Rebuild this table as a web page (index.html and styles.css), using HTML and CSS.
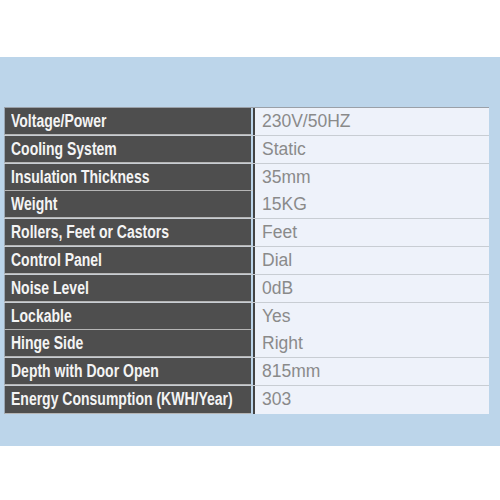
FILE: index.html
```html
<!DOCTYPE html>
<html>
<head>
<meta charset="utf-8">
<link rel="stylesheet" href="styles.css">
</head>
<body>
<div class="top"></div>
<div class="band">
  <div class="specs">
    <div class="row"><div class="k"><span class="lbl">Voltage/Power</span></div><div class="v">230V/50HZ</div></div>
    <div class="row"><div class="k"><span class="lbl">Cooling System</span></div><div class="v">Static</div></div>
    <div class="row"><div class="k"><span class="lbl">Insulation Thickness</span></div><div class="v">35mm</div></div>
    <div class="row"><div class="k"><span class="lbl">Weight</span></div><div class="v">15KG</div></div>
    <div class="row"><div class="k"><span class="lbl">Rollers, Feet or Castors</span></div><div class="v">Feet</div></div>
    <div class="row"><div class="k"><span class="lbl">Control Panel</span></div><div class="v">Dial</div></div>
    <div class="row"><div class="k"><span class="lbl">Noise Level</span></div><div class="v">0dB</div></div>
    <div class="row"><div class="k"><span class="lbl">Lockable</span></div><div class="v">Yes</div></div>
    <div class="row"><div class="k"><span class="lbl">Hinge Side</span></div><div class="v">Right</div></div>
    <div class="row"><div class="k"><span class="lbl">Depth with Door Open</span></div><div class="v">815mm</div></div>
    <div class="row"><div class="k"><span class="lbl">Energy Consumption (KWH/Year)</span></div><div class="v">303</div></div>
  </div>
</div>
</body>
</html>
```
FILE: styles.css
```css
html, body {
  margin: 0;
  padding: 0;
  background: #ffffff;
}
.top {
  height: 57px;
}
.band {
  height: 389px;
  background: #bcd5ea;
  padding: 50px 11px 0 4px;
  box-sizing: border-box;
}
.specs {
  display: flex;
  flex-direction: column;
  border-top: 1px solid #9aa0a8;
}
.row {
  display: grid;
  grid-template-columns: 247px 1fr;
  column-gap: 2px;
  height: 27.8px;
  box-sizing: border-box;
  border-bottom: 1px solid #c8cdd3;
}
.row:last-child {
  border-bottom: none;
}
.k {
  background: #4e4e4e;
  color: #f4f4f4;
  font-family: "Liberation Sans", Arial, sans-serif;
  font-weight: bold;
  font-size: 17.5px;
  line-height: 27px;
  padding-left: 6px;
  border-left: 1px solid #9aa6b2;
  border-bottom: 1px solid #b5b5b5;
  white-space: nowrap;
  overflow: hidden;
}
.lbl {
  display: inline-block;
  transform: scaleX(0.8);
  transform-origin: left center;
}
.v {
  background: #eef2fa;
  color: #8a8a8a;
  font-family: "Liberation Sans", Arial, sans-serif;
  font-size: 17.5px;
  line-height: 27px;
  padding-left: 7px;
  border-left: 2px solid #444;
}
```
